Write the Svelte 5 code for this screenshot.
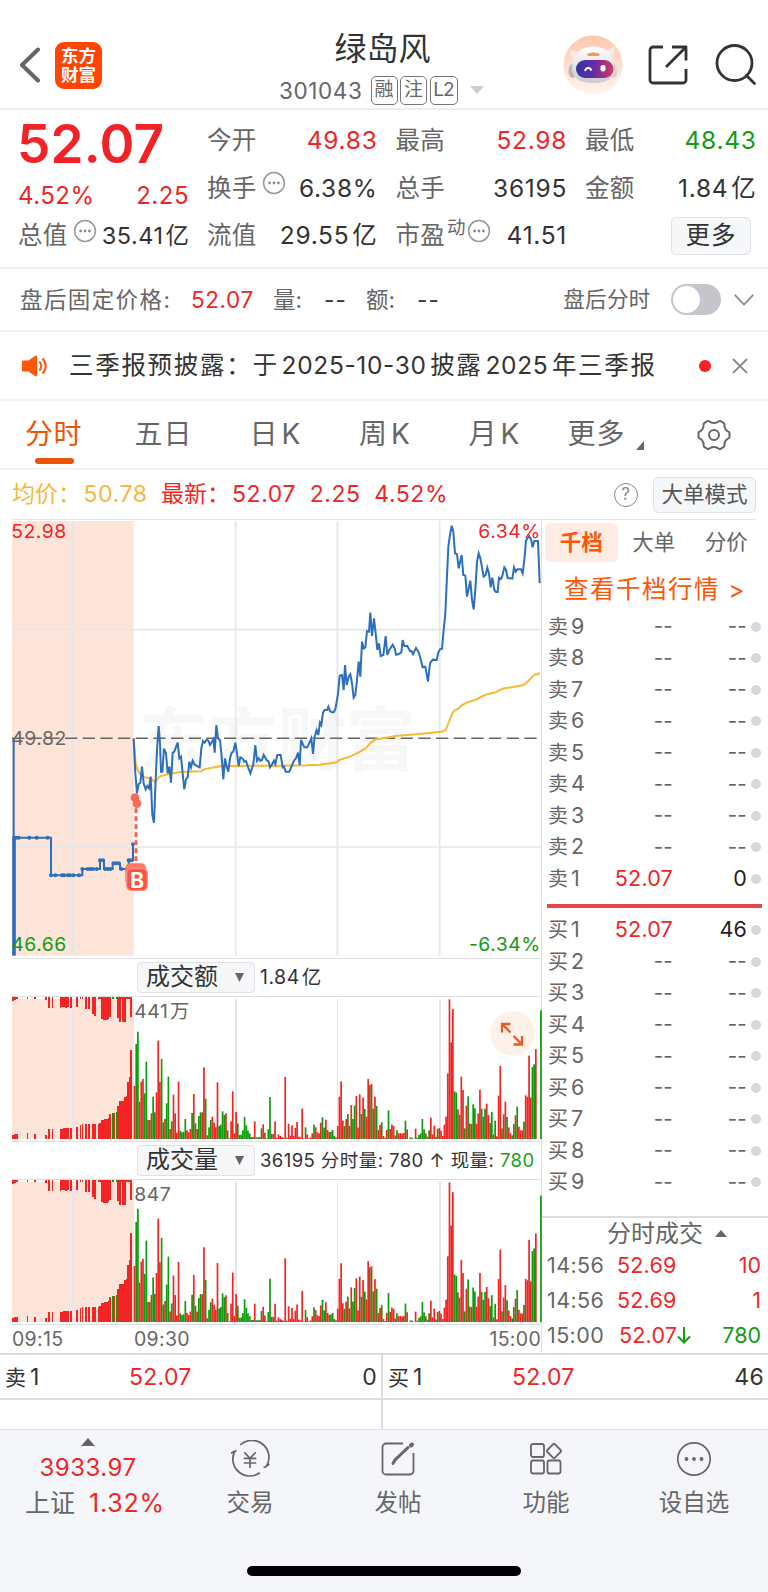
<script lang="ts">
	const asks = [9, 8, 7, 6, 5, 4, 3, 2, 1].map((n) => ({
		label: `卖${n}`,
		price: n === 1 ? '52.07' : '--',
		size: n === 1 ? '0' : '--'
	}));
	const bids = [1, 2, 3, 4, 5, 6, 7, 8, 9].map((n) => ({
		label: `买${n}`,
		price: n === 1 ? '52.07' : '--',
		size: n === 1 ? '46' : '--'
	}));

	const trades = [
		{ time: '14:56', price: '52.69', size: '10', down: false },
		{ time: '14:56', price: '52.69', size: '1', down: false },
		{ time: '15:00', price: '52.07', size: '780', down: true }
	];

	// Chart coordinates are in thirds of a pixel
	const pricePoints =
		'401,685 406,790 411,850 416,822 421,818 426,770 431,820 437,838 442,828 447,835 452,800 457,915 462,938 467,810 471,720 476,648 480,700 483,785 487,785 492,716 498,730 503,790 508,770 513,818 518,728 523,725 533,698 538,745 543,740 548,790 553,838 558,808 563,802 568,755 573,772 578,752 584,764 599,772 604,715 609,693 614,698 619,690 625,692 630,705 640,688 644,728 649,645 654,685 660,690 665,740 670,808 675,745 680,770 685,785 690,745 695,728 700,725 706,698 711,730 716,768 721,742 728,746 733,755 738,753 743,768 751,790 760,763 766,705 771,752 776,745 781,752 786,750 791,735 800,750 806,755 810,772 815,765 822,752 826,762 832,735 842,735 848,772 852,770 857,785 868,785 882,752 888,745 894,728 899,765 903,690 913,712 922,712 934,685 939,732 944,680 950,660 955,675 960,638 964,645 969,608 974,600 981,600 985,590 990,603 996,607 1001,607 1006,598 1014,552 1019,497 1026,495 1031,540 1035,465 1040,525 1046,500 1051,493 1056,520 1061,563 1066,555 1071,510 1076,455 1081,500 1086,395 1091,415 1096,412 1101,363 1107,365 1111,308 1116,378 1122,325 1127,370 1132,420 1137,400 1142,438 1150,435 1157,378 1162,435 1168,420 1178,404 1184,415 1188,434 1196,432 1204,427 1208,390 1213,408 1222,408 1230,423 1234,423 1239,432 1248,414 1255,425 1260,440 1268,472 1276,470 1284,515 1290,460 1298,449 1310,450 1315,428 1320,418 1326,416 1331,360 1336,310 1340,220 1345,110 1350,75 1355,47 1360,65 1365,130 1371,132 1376,175 1385,135 1390,195 1396,197 1401,260 1411,212 1416,270 1421,298 1426,240 1431,155 1436,130 1441,145 1451,200 1457,195 1462,173 1467,190 1472,232 1477,203 1483,240 1488,246 1493,246 1497,203 1503,207 1507,198 1513,172 1518,180 1523,204 1537,206 1542,172 1547,185 1552,178 1563,178 1568,190 1573,150 1578,92 1587,78 1593,88 1598,112 1603,93 1614,93 1619,220';
	const averagePoints =
		'401,685 407,760 412,778 420,792 430,801 452,805 465,817 478,800 490,796 520,790 540,786 603,784 612,778 660,769 700,768 840,767 920,766 960,764 1010,757 1018,750 1050,740 1075,728 1098,714 1112,698 1125,688 1155,684 1185,678 1250,673 1325,665 1337,660 1343,645 1350,628 1358,608 1366,600 1376,595 1385,586 1400,578 1430,568 1440,562 1460,553 1490,546 1496,541 1513,535 1540,531 1570,525 1580,518 1603,494 1614,493 1619,488';
	const auctionPoints =
		'41,685 41,983 153,983 153,1096 247,1096 247,1077 300,1077 300,1051 312,1051 312,1077 338,1077 338,1060 360,1060 360,1077 386,1077 386,1051 399,1051 399,1003';
	const auctionDots = [
		[48, 983], [56, 983], [88, 983], [110, 983], [143, 983], [153, 1096], [166, 1096], [186, 1096],
		[192, 1096], [204, 1096], [210, 1096], [220, 1096], [237, 1096], [247, 1077], [263, 1077],
		[271, 1077], [279, 1077], [290, 1077], [300, 1051], [309, 1051], [316, 1077], [323, 1077],
		[331, 1077], [341, 1060], [348, 1060], [356, 1060], [364, 1077], [386, 1051], [393, 1051], [399, 1003]
	];

	// One bar per minute: positive is a rise, negative a fall
	const minutes = [
		159, -285, -322, 112, 172, 180, -137, -232, 57, -57, 77, -127, -80, 140, 295, 171, -240, -50, 60, -107,
		-187, 30, -53, 133, 77, 19, 172, -25, -20, -22, -60, 26, 20, 30, -78, 135, -47, 30, -69, -80,
		80, 215, -121, 11, -35, -57, 67, 49, 35, 170, -39, -43, -83, -72, 77, -26, -2, 53, 143, 17,
		81, -47, -12, -13, -26, -66, -41, -25, -17, -6, -6, 53, -5, -5, 6, -32, 44, 19, -2, -29,
		-126, -15, 15, 53, 4, 14, 9, 6, 4, 186, -4, 46, 10, 41, 9, 33, 51, 7, 5, 91,
		1, -35, 14, 2, 5, 17, -43, 35, 20, 17, 49, -65, -34, 58, 27, 21, -22, -27, -9, 5,
		39, 127, 173, 55, -39, 60, -75, 40, 102, -60, -100, 129, 34, 134, -75, 124, -90, 67, 180, -162,
		165, -91, 127, -99, 27, 42, -50, 9, 3, 27, -86, 30, 43, 39, 10, -26, 17, 18, 16, 18,
		-55, 29, 0, -5, -4, 0, 31, -4, -12, -17, -60, -29, 17, -7, -26, 64, 14, 40, -7, -30,
		33, 25, 9, 43, 67, 197, 419, 290, 390, -143, -139, 89, -73, 187, 147, -32, 100, -128, 47, 45,
		-104, -92, 46, 77, 148, -91, -67, -91, 106, 72, -48, -81, 14, -55, 8, 130, 219, -32, 74, 112,
		-66, 35, 18, -11, -45, 71, -97, 37, 26, 26, -52, 131, 127, 250, 124, -216, -224, 270, 0, 0,
		-386
	];

	// Call auction, 09:15 to 09:25: x, matched (bottom), unmatched (top)
	const auction = [
		[38, 13, 12], [44, 14, 8], [50, 15, 6], [82, 18, 5], [104, 14, 5], [137, 13, 10], [147, 29, 32],
		[157, 30, 32], [181, 30, 32], [186, 31, 30], [192, 32, 30], [198, 33, 32], [203, 33, 30], [212, 34, 32],
		[230, 37, 30], [241, 43, 5], [247, 44, 5], [257, 44, 37], [267, 44, 37], [279, 45, 50], [285, 45, 58],
		[295, 45, 5], [300, 48, 5], [305, 58, 67], [310, 58, 69], [315, 59, 69], [320, 60, 69], [325, 62, 67],
		[330, 74, 60], [338, -77, -6], [343, 77, 0], [349, -82, -6], [354, 98, 62], [359, 113, 75], [364, 114, 5],
		[369, 115, 75], [375, 126, 75], [379, 130, 5], [383, 172, 5], [388, 185, 5], [393, 267, 60]
	];

	const panes = [
		{ name: '成交额', max: '441', unit: '万', ratio: (_: number) => 1 },
		{ name: '成交量', max: '847', unit: '', ratio: (i: number) => 1.055 - i * 0.0003 }
	];

	const fill = (v: number) => (v < 0 ? '#0a9c0a' : '#f22424');
</script>

{#snippet info()}
	<svg class="info" width="24" height="24" viewBox="0 0 24 24">
		<circle cx="12" cy="12" r="10.4" fill="none" stroke="#999" stroke-width="1.5" />
		<circle cx="7.6" cy="12" r="1.4" fill="#888" />
		<circle cx="12" cy="12" r="1.4" fill="#888" />
		<circle cx="16.4" cy="12" r="1.4" fill="#888" />
	</svg>
{/snippet}

<div class="screen">
	<header class="top">
		<svg class="back" width="22" height="36" viewBox="0 0 22 36">
			<path d="M19 2.500 3 18l16 15.500" fill="none" stroke="#666" stroke-width="4" stroke-linecap="round" stroke-linejoin="round" />
		</svg>
		<div class="logo"><span>东方</span><span>财富</span></div>
		<div class="name">
			<h1>绿岛风</h1>
			<div class="code">
				<span class="num">301043</span>
				<span class="tag">融</span>
				<span class="tag">注</span>
				<span class="tag l2">L2</span>
				<svg width="14" height="8" viewBox="0 0 14 8"><path d="M0 0h14L7 8z" fill="#ccc" /></svg>
			</div>
		</div>
		<div class="actions">
			<svg width="60" height="60" viewBox="0 0 60 60">
				<defs>
					<linearGradient id="halo" x1="0" y1="0" x2="0" y2="1">
						<stop offset="0" stop-color="#fcc7ad" />
						<stop offset="1" stop-color="#fff5f0" />
					</linearGradient>
					<linearGradient id="visor" x1="0" y1="0" x2="1" y2="0">
						<stop offset="0" stop-color="#3434a8" />
						<stop offset="0.5" stop-color="#6a2aa4" />
						<stop offset="1" stop-color="#d83a68" />
					</linearGradient>
					<linearGradient id="helmet" x1="0" y1="0" x2="0" y2="1">
						<stop offset="0" stop-color="#fff" />
						<stop offset="1" stop-color="#ccc9cf" />
					</linearGradient>
				</defs>
				<circle cx="30" cy="30" r="29.500" fill="url(#halo)" />
				<path d="M8 14c-2 6 0 9 6 11l7-9c-6 1-10 1-13-2zM51 11c2 6 0 11-6 13l-6-9c6 1 9 0 12-4z" fill="#f4eae7" />
				<ellipse cx="9.500" cy="36" rx="4" ry="7" fill="#bbb6bb" />
				<ellipse cx="50.500" cy="36" rx="4" ry="7" fill="#d8d4d6" />
				<path d="M9 33c0-14 9-21.500 21.500-21.500S51 19 51 33c0 11-8 15-20.500 15S9 44 9 33z" fill="url(#helmet)" />
				<path d="M24 19c5-2 9-2 13 0l-1 2H25z" fill="#f29a58" />
				<rect x="13" y="25" width="37.500" height="18" rx="9" fill="url(#visor)" />
				<path d="M22 36c1-4 5-4 6.500-.5" fill="none" stroke="#fff" stroke-width="2" />
				<rect x="37.500" y="30" width="5" height="6.500" rx="2" fill="#fff" />
			</svg>
			<svg width="42" height="42" viewBox="0 0 42 42" fill="none" stroke="#333" stroke-width="2.800" stroke-linejoin="round">
				<path d="M16 3H6a3 3 0 0 0-3 3v30a3 3 0 0 0 3 3h30a3 3 0 0 0 3-3V25M25 3h14v13.500M39 3 19 23" />
			</svg>
			<svg width="42" height="42" viewBox="0 0 42 42" fill="none" stroke="#333" stroke-width="2.800">
				<circle cx="19.500" cy="19" r="17.500" />
				<path d="m31.500 31.500 8 8" stroke-linecap="round" />
			</svg>
		</div>
	</header>

	<section class="quote">
		<div class="last">
			<div class="price">52.07</div>
			<div class="change"><span>4.52%</span><span>2.25</span></div>
			<div class="cell small"><span class="key">总值</span>{@render info()}<b>35.41<i>亿</i></b></div>
		</div>
		<div class="cells">
			<div class="cell"><span class="key">今开</span><b class="up">49.83</b></div>
			<div class="cell"><span class="key">最高</span><b class="up">52.98</b></div>
			<div class="cell"><span class="key">最低</span><b class="down">48.43</b></div>
			<div class="cell"><span class="key">换手</span>{@render info()}<b>6.38%</b></div>
			<div class="cell"><span class="key">总手</span><b>36195</b></div>
			<div class="cell"><span class="key">金额</span><b>1.84<i>亿</i></b></div>
			<div class="cell"><span class="key">流值</span><b>29.55<i>亿</i></b></div>
			<div class="cell"><span class="key">市盈</span><sup>动</sup>{@render info()}<b>41.51</b></div>
			<div class="cell"><button class="more">更多</button></div>
		</div>
	</section>

	<section class="after">
		<span class="fixed">盘后固定价格:</span>
		<span class="fixed-price up">52.07</span>
		<span class="vol">量:</span>
		<span class="dash">--</span>
		<span class="amt">额:</span>
		<span class="dash">--</span>
		<span class="toggle-label">盘后分时</span>
		<span class="toggle"></span>
		<svg width="20" height="12" viewBox="0 0 20 12"><path d="m.8.8 9.200 9.700L19.200.8" fill="none" stroke="#888" stroke-width="1.800" /></svg>
	</section>

	<section class="notice">
		<svg width="26" height="22" viewBox="0 0 26 22">
			<path d="M1.500 5.500h5L13 1q2-1.200 2 1v18q0 2.200-2 1l-6.500-4.500h-5C.5 16.500 0 16 0 15V7c0-1 .5-1.500 1.500-1.500z" fill="#fc5606" />
			<path d="M17.300 6.500c2.600 2.600 2.600 6.400 0 9M20.500 3.500c4.300 4.500 4.300 10.500 0 15" fill="none" stroke="#fc5606" stroke-width="2" />
		</svg>
		<p>三季报预披露：于<i>2025-10-30</i>披露<i>2025</i>年三季报</p>
		<span class="dot"></span>
		<svg width="16" height="16" viewBox="0 0 16 16"><path d="m1 1 14 14M15 1 1 15" stroke="#8c8c8c" stroke-width="1.900" /></svg>
	</section>

	<nav class="tabs">
		<span class="active">分时</span>
		<span>五日</span>
		<span>日<i>K</i></span>
		<span>周<i>K</i></span>
		<span>月<i>K</i></span>
		<span>更多</span>
		<svg class="corner" width="8" height="9" viewBox="0 0 8 9"><path d="M8 0v9H0z" fill="#666" /></svg>
		<svg class="gear" width="34" height="34" viewBox="0 0 34 34" fill="none" stroke="#666" stroke-width="2" stroke-linejoin="round">
			<path d="M12 3.200c1.800 1.300 3 1.700 5 1.700s3.200-.4 5-1.700q.8-.4 1.600 0l3.200 1.900q.6.400.6 1.300c-.2 2 .2 3.400 1.200 4.800 1 1.500 1.900 2 3.200 2.600q.7.400.7 1.200v4q0 .8-.7 1.200c-1.300.6-2.200 1.100-3.200 2.600-1 1.400-1.400 2.800-1.200 4.800q0 .9-.6 1.300l-3.200 1.900q-.8.400-1.600 0c-1.800-1.300-3-1.700-5-1.700s-3.200.4-5 1.700q-.8.400-1.600 0l-3.200-1.900q-.6-.4-.6-1.300c.2-2-.2-3.400-1.200-4.800-1-1.500-1.900-2-3.200-2.600q-.7-.4-.7-1.200v-4q0-.8.700-1.200c1.300-.6 2.200-1.100 3.200-2.600 1-1.400 1.400-2.800 1.200-4.800q0-.9.600-1.300l3.200-1.900q.8-.4 1.600 0z" />
			<circle cx="17" cy="17" r="5" />
		</svg>
	</nav>

	<section class="legend">
		<span class="avg">均价：<i>50.78</i></span>
		<span class="now">最新：<i>52.07</i><i>2.25</i><i>4.52%</i></span>
		<span class="help">?</span>
		<button>大单模式</button>
	</section>

	<main>
		<div class="charts">
			<svg class="intraday" width="542" height="439" viewBox="0 27 1626 1317">
				<rect x="36" y="33" width="365" height="1304" fill="#fce4d9" />
				<g class="watermark">
					<text x="418" y="764">东方财富</text>
				</g>
				<g class="grid">
					<path d="M217 33V1337M707 33V1337M1012 33V1337M1319 33V1337M36 359H1625M36 1011H1625" />
				</g>
				<path d="M36 685H1619" stroke="#666" stroke-width="4.500" stroke-dasharray="37 16" />
				<polyline points={averagePoints} class="average" />
				<polyline points={auctionPoints} class="line" />
				<path d="M42 980V1337" stroke="#2c6fbe" stroke-width="11" />
				{#each auctionDots as [x, y]}
					<circle cx={x} cy={y} r="6" fill="#2c6fbe" />
				{/each}
				<polyline points={pricePoints} class="line" />
				<path d="M408 895V1075" stroke="#f3604f" stroke-width="9" stroke-dasharray="14 10" />
				<circle cx="405" cy="863" r="13" fill="#fa6857" />
				<circle cx="411" cy="881" r="13" fill="#fa6857" />
				<rect x="376" y="1060" width="62" height="66" rx="14" fill="#ff7768" />
				<rect x="380" y="1076" width="62" height="65" rx="14" fill="#ff5140" stroke="#ff8c80" stroke-width="4" />
				<text x="411" y="1133" class="mark">B</text>
				<text x="34" y="85" class="axis up">52.98</text>
				<text x="34" y="704" class="axis">49.82</text>
				<text x="34" y="1323" class="axis down">46.66</text>
				<text x="1622" y="85" class="axis up end">6.34%</text>
				<text x="1622" y="1323" class="axis down end">-6.34%</text>
			</svg>

			{#each panes as pane, p}
				<div class="pane-head">
					<span class="picker">{pane.name}<svg width="9" height="9" viewBox="0 0 9 9"><path d="M0 0h9L4.500 9z" fill="#666" /></svg></span>
					{#if p === 0}
						<span class="sum">1.84<i>亿</i></span>
					{:else}
						<span class="wide">36195 分时量: 780 ↑ 现量: <em>780</em></span>
					{/if}
				</div>
				<svg class="bars" width="542" height="144" viewBox="0 0 1626 432" shape-rendering="crispEdges">
					<rect x="36" y="6" width="365" height="420" fill="#fce4d9" />
					<path d="M217 6V426M707 6V426M1012 6V426M1319 6V426" class="vline" />
					{#each auction as [x, low, high]}
						<rect x={x - 2.5} y={426 - Math.abs(low)} width="5.500" height={Math.abs(low)} fill={fill(low)} />
						<rect x={x - 2.5} y="0" width="5.500" height={Math.abs(high)} fill={fill(high)} />
					{/each}
					<path d="M351 2H396" stroke="#f22424" stroke-width="4" />
					{#each minutes as v, i}
						<rect
							x={401 + i * 5.08}
							y={426 - Math.abs(v) * pane.ratio(i)}
							width="5.100"
							height={Math.abs(v) * pane.ratio(i)}
							fill={fill(v)}
							shape-rendering="auto"
						/>
					{/each}
					<text x="403" y="64" class="axis">{pane.max}<tspan dx="5">{pane.unit}</tspan></text>
				</svg>
			{/each}

			<div class="times"><span>09:15</span><span>09:30</span><span>15:00</span></div>

			<span class="expand">
				<svg width="24" height="24" viewBox="0 0 24 24" fill="none" stroke="#f05a1a" stroke-width="2.300">
					<path d="M2 10.500V2h8.500M2 2l8.500 8.500M13.500 22.500H22V14M22 22.500 13.500 14" />
				</svg>
			</span>
		</div>

		<aside>
			<div class="book-tabs"><span class="on">千档</span><span>大单</span><span>分价</span></div>
			<div class="link">查看千档行情 <i>&gt;</i></div>
			<div class="book">
				{#each asks as row}
					<div class="level" class:filled={row.price !== '--'}><span>{row.label[0]}<i>{row.label[1]}</i></span><b>{row.price}</b><em>{row.size}</em><u></u></div>
				{/each}
				<hr />
				{#each bids as row}
					<div class="level" class:filled={row.price !== '--'}><span>{row.label[0]}<i>{row.label[1]}</i></span><b>{row.price}</b><em>{row.size}</em><u></u></div>
				{/each}
			</div>
			<div class="trades-head">分时成交<svg width="12" height="7" viewBox="0 0 12 7"><path d="M6 0l6 7H0z" fill="#666" /></svg></div>
			{#each trades as t}
				<div class="trade">
					<span>{t.time}</span>
					<b class:shift={t.down}>{t.price}</b>
					{#if t.down}
						<svg width="14" height="17" viewBox="0 0 14 17"><path d="M7 0v15.500M1 9.500l6 6 6-6" fill="none" stroke="#1a9c1a" stroke-width="2" /></svg>
					{/if}
					<em class={t.down ? 'down' : 'up'}>{t.size}</em>
				</div>
			{/each}
		</aside>
	</main>

	<section class="best">
		<div><span>卖<i>1</i></span><b>52.07</b><em>0</em></div>
		<div><span>买<i>1</i></span><b>52.07</b><em>46</em></div>
	</section>
	<div class="blank"><div></div><div></div></div>

	<footer>
		<div class="index">
			<svg width="14" height="8" viewBox="0 0 14 8"><path d="M7 0l7 8H0z" fill="#666" /></svg>
			<span class="points">3933.97</span>
			<span class="sse">上证<i>1.32%</i></span>
		</div>
		<div class="item">
			<svg width="40" height="38" viewBox="0 0 40 38" fill="none" stroke="#666" stroke-width="1.700">
				<path d="M10.300 5A17 17 0 0 1 36.300 26.500M33.500 27.500l2.800-1 3-2.500M29.800 32.800A17 17 0 0 1 4.600 11.500M1 13.300l3-1.800 2.500-.6" />
				<path d="m14.300 12.300 5.700 6 5.700-6M13.700 18.300h12.600M13.700 23h12.600M20 18.300V28" />
			</svg>
			交易
		</div>
		<div class="item">
			<svg width="36" height="38" viewBox="0 0 36 38" fill="none" stroke="#666" stroke-width="1.800">
				<path d="M23 3.500H6A3.500 3.500 0 0 0 2.500 7v24A3.500 3.500 0 0 0 6 34.500h24a3.500 3.500 0 0 0 3.500-3.500V13" />
				<path d="m13 23.500 2-3.500L28 7.500" stroke-width="3" stroke-linecap="round" />
				<path d="m31 5.500 1-1" stroke-width="4" stroke-linecap="round" />
			</svg>
			发帖
		</div>
		<div class="item">
			<svg width="36" height="38" viewBox="0 0 36 38" fill="none" stroke="#666" stroke-width="1.800" stroke-linejoin="round">
				<rect x="3" y="4" width="13" height="13" rx="2" />
				<rect x="3" y="20.500" width="13" height="13" rx="2" />
				<rect x="19.500" y="20.500" width="13" height="13" rx="2" />
				<path d="M25 4.300q1-1 2 0l5.600 5.700q1 1 0 2L27 17.700q-1 1-2 0L19.400 12q-1-1 0-2z" />
			</svg>
			功能
		</div>
		<div class="item">
			<svg width="36" height="38" viewBox="0 0 36 38">
				<circle cx="18" cy="19" r="16.200" fill="none" stroke="#666" stroke-width="1.700" />
				<circle cx="10.500" cy="19" r="1.900" fill="#666" />
				<circle cx="18" cy="19" r="1.900" fill="#666" />
				<circle cx="25.500" cy="19" r="1.900" fill="#666" />
			</svg>
			设自选
		</div>
		<div class="home"></div>
	</footer>
</div>

<style>
	:global(body) {
		margin: 0;
		background: #fff;
	}

	.screen {
		width: 768px;
		height: 1592px;
		overflow: hidden;
		display: flex;
		flex-direction: column;
		font-family: Inter, "Noto Sans CJK SC", sans-serif;
		line-height: 1.2;
		color: #333;
		font-weight: 400;
		white-space: nowrap;
	}

	.screen * { box-sizing: border-box; flex-shrink: 0; }
	i, em, u { font-style: normal; text-decoration: none; }
	b { font-weight: 400; }
	svg { display: block; }
	button { font: inherit; color: inherit; padding: 0; background: #f6f7f9; border: 1.5px solid #e0e2e6; border-radius: 5px; }
	.up { color: #ee2626; }
	.down { color: #149a14; }

	/* Header */
	.top {
		height: 110px;
		border-bottom: 2px solid #eee;
		display: flex;
		align-items: center;
		padding: 22px 11px 0 19px;
	}
	.logo {
		width: 47px; height: 47px;
		margin-left: 14px;
		border-radius: 9px;
		background: #ff4406;
		color: #fff;
		font-size: 17.500px;
		font-weight: 700;
		line-height: 19.500px;
		display: flex;
		flex-direction: column;
		align-items: center;
		justify-content: center;
	}
	.name {
		width: 210px;
		height: 88px;
		margin-left: 177px;
		padding-top: 4px;
	}
	h1 { margin: 0; font-size: 32px; font-weight: 400; line-height: 48px; text-align: center; width: 207px; }
	.code { display: flex; align-items: center; height: 34px; color: #666; }
	.num { font-size: 22.500px; width: 91.500px; letter-spacing: 0.600px; }
	.tag {
		width: 27px; height: 29px;
		margin-right: 2.500px;
		border: 1.500px solid #777;
		border-radius: 5px;
		font-size: 19px;
		line-height: 26px;
		text-align: center;
	}
	.l2 { width: 28px; margin-right: 12px; letter-spacing: -0.800px; }
	.actions { margin-left: auto; display: flex; align-items: center; }
	.actions svg:nth-child(1) { margin-right: 24px; }
	.actions svg:nth-child(2) { margin-right: 26px; }

	/* Quote */
	.quote {
		height: 159px;
		border-bottom: 2px solid #eee;
		display: flex;
		gap: 19px;
		padding: 7px 0 0 18px;
	}
	.last { width: 170px; }
	.price { height: 55px; line-height: 55px; font-size: 53px; font-weight: 600; color: #f22226; letter-spacing: 0.200px; margin-left: -1px; }
	.change { height: 46px; line-height: 48px; font-size: 24px; letter-spacing: 0.500px; color: #ee2626; display: flex; justify-content: space-between; margin-right: -1px; }
	.cells { display: grid; grid-template-columns: 169px 170px 170px; column-gap: 19.500px; grid-auto-rows: 47.500px; }
	.cell { display: flex; align-items: center; font-size: 24.500px; }
	.cell .key { color: #666; letter-spacing: 0.300px; }
	.cell b { margin-left: auto; letter-spacing: 0.700px; margin-right: -1.500px; }
	.cell b i { padding-left: 3px; }
	.cell .info { margin: -10px 0 0 5px; }
	.small { height: 36px; }
	.small b { font-size: 23.500px; letter-spacing: 0.500px; }
	.small b i { padding-left: 2px; }
	sup { font-size: 18.500px; line-height: 20px; color: #666; margin: -18px -4px 0 2px; }
	.more { width: 80px; height: 38px; margin-left: 86px; letter-spacing: 1px; }

	/* After-hours */
	.after {
		height: 63px;
		border-bottom: 2px solid #f2f2f3;
		display: flex;
		align-items: center;
		padding-left: 20px;
		font-size: 22.500px;
		color: #666;
	}
	.fixed { width: 171px; letter-spacing: 1.400px; }
	.fixed-price { width: 82px; letter-spacing: 0.600px; }
	.vol, .amt { width: 51px; }
	.dash { width: 42px; color: #333; letter-spacing: 1.200px; }
	.toggle-label { margin-left: auto; font-size: 21.500px; letter-spacing: 0.300px; margin-right: 20.500px; }
	.toggle {
		width: 50px; height: 31px;
		border-radius: 16px;
		background: #c5c5cc;
		padding: 2px;
		margin-right: 13px;
	}
	.toggle::before { content: ''; display: block; width: 27px; height: 27px; border-radius: 50%; background: #fff; }
	.after svg { margin-right: 14px; }

	/* Notice */
	.notice {
		height: 69px;
		border-bottom: 2px solid #f2f2f3;
		display: flex;
		align-items: center;
		padding-left: 22px;
	}
	.notice p { margin: 0 0 0 21px; width: 630px; font-size: 24.500px; letter-spacing: 1.700px; }
	.notice p i { letter-spacing: 0.650px; padding: 0 3.500px 0 3px; }
	.dot { width: 12px; height: 12px; border-radius: 50%; background: #f22226; margin-right: 20.500px; }

	/* Tabs */
	.tabs {
		height: 69px;
		border-bottom: 2px solid #f2f2f3;
		display: flex;
		align-items: center;
		padding-left: 25px;
		font-size: 28px;
		color: #666;
	}
	.tabs span { width: 109.500px; letter-spacing: 1px; }
	.tabs i { padding-left: 3px; }
	.tabs span:nth-child(2) { width: 115px; }
	.tabs span:nth-child(5) { width: 99px; }
	.tabs span:nth-child(6) { width: 68px; }
	.tabs .active { color: #ec5408; position: relative; letter-spacing: 0.500px; }
	.active::after {
		content: '';
		position: absolute;
		left: 10px; bottom: -12.500px;
		width: 39px; height: 6px;
		border-radius: 3px;
		background: #ec5408;
	}
	.corner { margin-top: 21px; }
	.gear { margin-left: 53px; }

	/* Legend above the chart */
	.legend { height: 49px; display: flex; align-items: center; padding: 0 12px; font-size: 23px; }
	.avg { color: #f6b83e; width: 149px; }
	.avg i { margin-left: 2.500px; }
	.legend i { letter-spacing: 0.600px; }
	.now { color: #ee2626; }
	.now i:first-child { margin-left: 2px; }
	.now i:not(:last-child) { margin-right: 13.500px; }
	.help {
		width: 24px; height: 24px;
		margin-left: auto;
		margin-right: 15.500px;
		border: 1.500px solid #888;
		border-radius: 50%;
		font-size: 17px;
		line-height: 21px;
		text-align: center;
		color: #888;
	}
	.legend button { width: 103px; height: 36px; font-size: 21.500px; color: #555; }

	main { height: 836px; display: flex; border-bottom: 2px solid #dcdce2; }

	/* Chart column */
	.charts { position: relative; width: 542px; border-right: 1.500px solid #dfe0e4; }
	.intraday, .bars { margin-right: -2px; }
	.intraday { background: linear-gradient(#e2e4e8, #e2e4e8) 12px 0 / 530px 1px no-repeat; }
	.grid path, .vline { stroke: #e3e6ed; stroke-width: 5; fill: none; }
	.watermark text { font-size: 207px; font-weight: 700; fill: #f7f7f7; }
	.line { fill: none; stroke: #2c6fbe; stroke-width: 6; stroke-linejoin: miter; }
	.average { fill: none; stroke: #f8b832; stroke-width: 6; }
	.axis { font-size: 58px; letter-spacing: 1.500px; fill: #666; }
	.axis.up { fill: #ee2626; }
	.axis.down { fill: #149a14; }
	.end { text-anchor: end; }
	.mark { font-size: 64px; font-weight: 700; fill: #fff; text-anchor: middle; }
	.pane-head {
		height: 39px;
		margin-left: 12px;
		border-top: 1.500px solid #dfe0e4;
		border-bottom: 1.500px solid #dfe0e4;
		display: flex;
		align-items: center;
		padding-left: 125px;
		font-size: 19.500px;
	}
	.picker {
		width: 118px; height: 31px;
		margin-right: 5px;
		border: 1.500px solid #e0e2e6;
		border-radius: 4px;
		background: #f6f7f9;
		font-size: 24px;
		display: flex;
		align-items: center;
		justify-content: space-between;
		padding: 0 10px 0 8px;
	}
	.sum { letter-spacing: 0.500px; }
	.sum i { padding-left: 2px; }
	.wide { font-size: 18.500px; letter-spacing: 0.420px; }
	.wide em { color: #1aa01a; }
	.times {
		height: 31px;
		margin-left: 12px;
		border-top: 1.500px solid #dfe0e4;
		display: flex;
		align-items: center;
		font-size: 19.500px;
		letter-spacing: 0.300px;
		color: #666;
	}
	.times span:first-child { width: 122px; }
	.times span:last-child { margin-left: auto; }
	.expand {
		position: absolute;
		left: 489.500px; top: 492px;
		width: 45px; height: 45px;
		border-radius: 50%;
		background: #fdf1ea;
		display: grid;
		place-items: center;
	}

	/* Order book column */
	aside { width: 226px; }
	.book-tabs { height: 48px; display: flex; align-items: center; margin-right: 12px; border-top: 1.500px solid #e2e4e8; padding: 0 0 2px 3px; font-size: 21.500px; color: #666; }
	.book-tabs span { width: 72.500px; text-align: center; line-height: 39px; }
	.book-tabs .on { border-radius: 6px; background: #feebe3; color: #fc5606; font-weight: 700; }
	.link { height: 44px; line-height: 44px; padding-left: 22px; font-size: 24.500px; letter-spacing: 1.500px; color: #fc5606; }
	.link i { font-size: 24px; }
	.book { height: 607px; border-bottom: 2px solid #dcdde2; }
	.level { height: 31.500px; display: flex; align-items: center; padding-left: 6px; font-size: 20.500px; color: #666; }
	.level span { width: 60px; font-size: 20px; }
	.level i { padding-left: 3px; font-size: 21.500px; }
	.level b { width: 65px; text-align: right; letter-spacing: 0.200px; }
	.level em { width: 74px; text-align: right; letter-spacing: 0.200px; }
	.level u { width: 10px; height: 10px; border-radius: 50%; background: #d4d8df; margin-left: 3.500px; }
	.level.filled b { color: #ee2626; font-size: 21.500px; }
	.level.filled em { color: #222; font-size: 21.500px; }
	hr { margin: 9px 6px 7px 5px; height: 4px; border: 0; background: #e24848; }
	.trades-head { height: 31px; line-height: 31px; padding-left: 65px; font-size: 24px; color: #666; display: flex; align-items: center; gap: 12px; }
	.trade { height: 35px; display: flex; align-items: center; padding: 0 7px 2px 5px; font-size: 21.500px; color: #666; }
	.trade span { width: 70px; letter-spacing: 0.400px; }
	.trade b { color: #ee2626; letter-spacing: 0.200px; }
	.trade .shift { padding-left: 2px; }
	.trade em { margin-left: auto; }

	/* Best bid and ask */
	.best { height: 45px; display: grid; grid-template-columns: 383px 385px; border-bottom: 2px solid #dcdce2; }
	.best div { display: flex; align-items: center; padding: 3px 4px 0 5px; font-size: 21px; }
	.best div:first-child, .blank div:first-child { border-right: 2px solid #dcdce2; }
	.best i { padding-left: 4px; font-size: 23px; }
	.best span { width: 124px; }
	.best b { color: #ee2626; font-size: 23px; letter-spacing: 0.300px; }
	.best em { margin-left: auto; font-size: 23px; letter-spacing: 0.300px; }
	.blank { height: 29px; display: grid; grid-template-columns: 383px 385px; }

	/* Bottom bar */
	footer {
		position: relative;
		height: 163px;
		background: #f5f6f9;
		border-top: 1.500px solid #dedfe3;
		display: flex;
		padding-top: 8px;
	}
	.index { width: 176px; display: flex; flex-direction: column; align-items: center; }
	.points { line-height: 36px; padding-top: 4px; font-size: 24px; letter-spacing: 0.500px; color: #ee2626; }
	.sse { line-height: 34px; font-size: 25px; color: #666; padding-left: 14px; }
	.sse i { color: #ee2626; margin-left: 14px; letter-spacing: 0.800px; }
	.item { width: 148px; padding-top: 2px; display: flex; flex-direction: column; align-items: center; font-size: 23.500px; line-height: 33px; color: #666; gap: 8px; }
	.home {
		position: absolute;
		left: 247px; top: 136px;
		width: 274px; height: 10px;
		border-radius: 5px;
		background: #000;
	}
</style>
